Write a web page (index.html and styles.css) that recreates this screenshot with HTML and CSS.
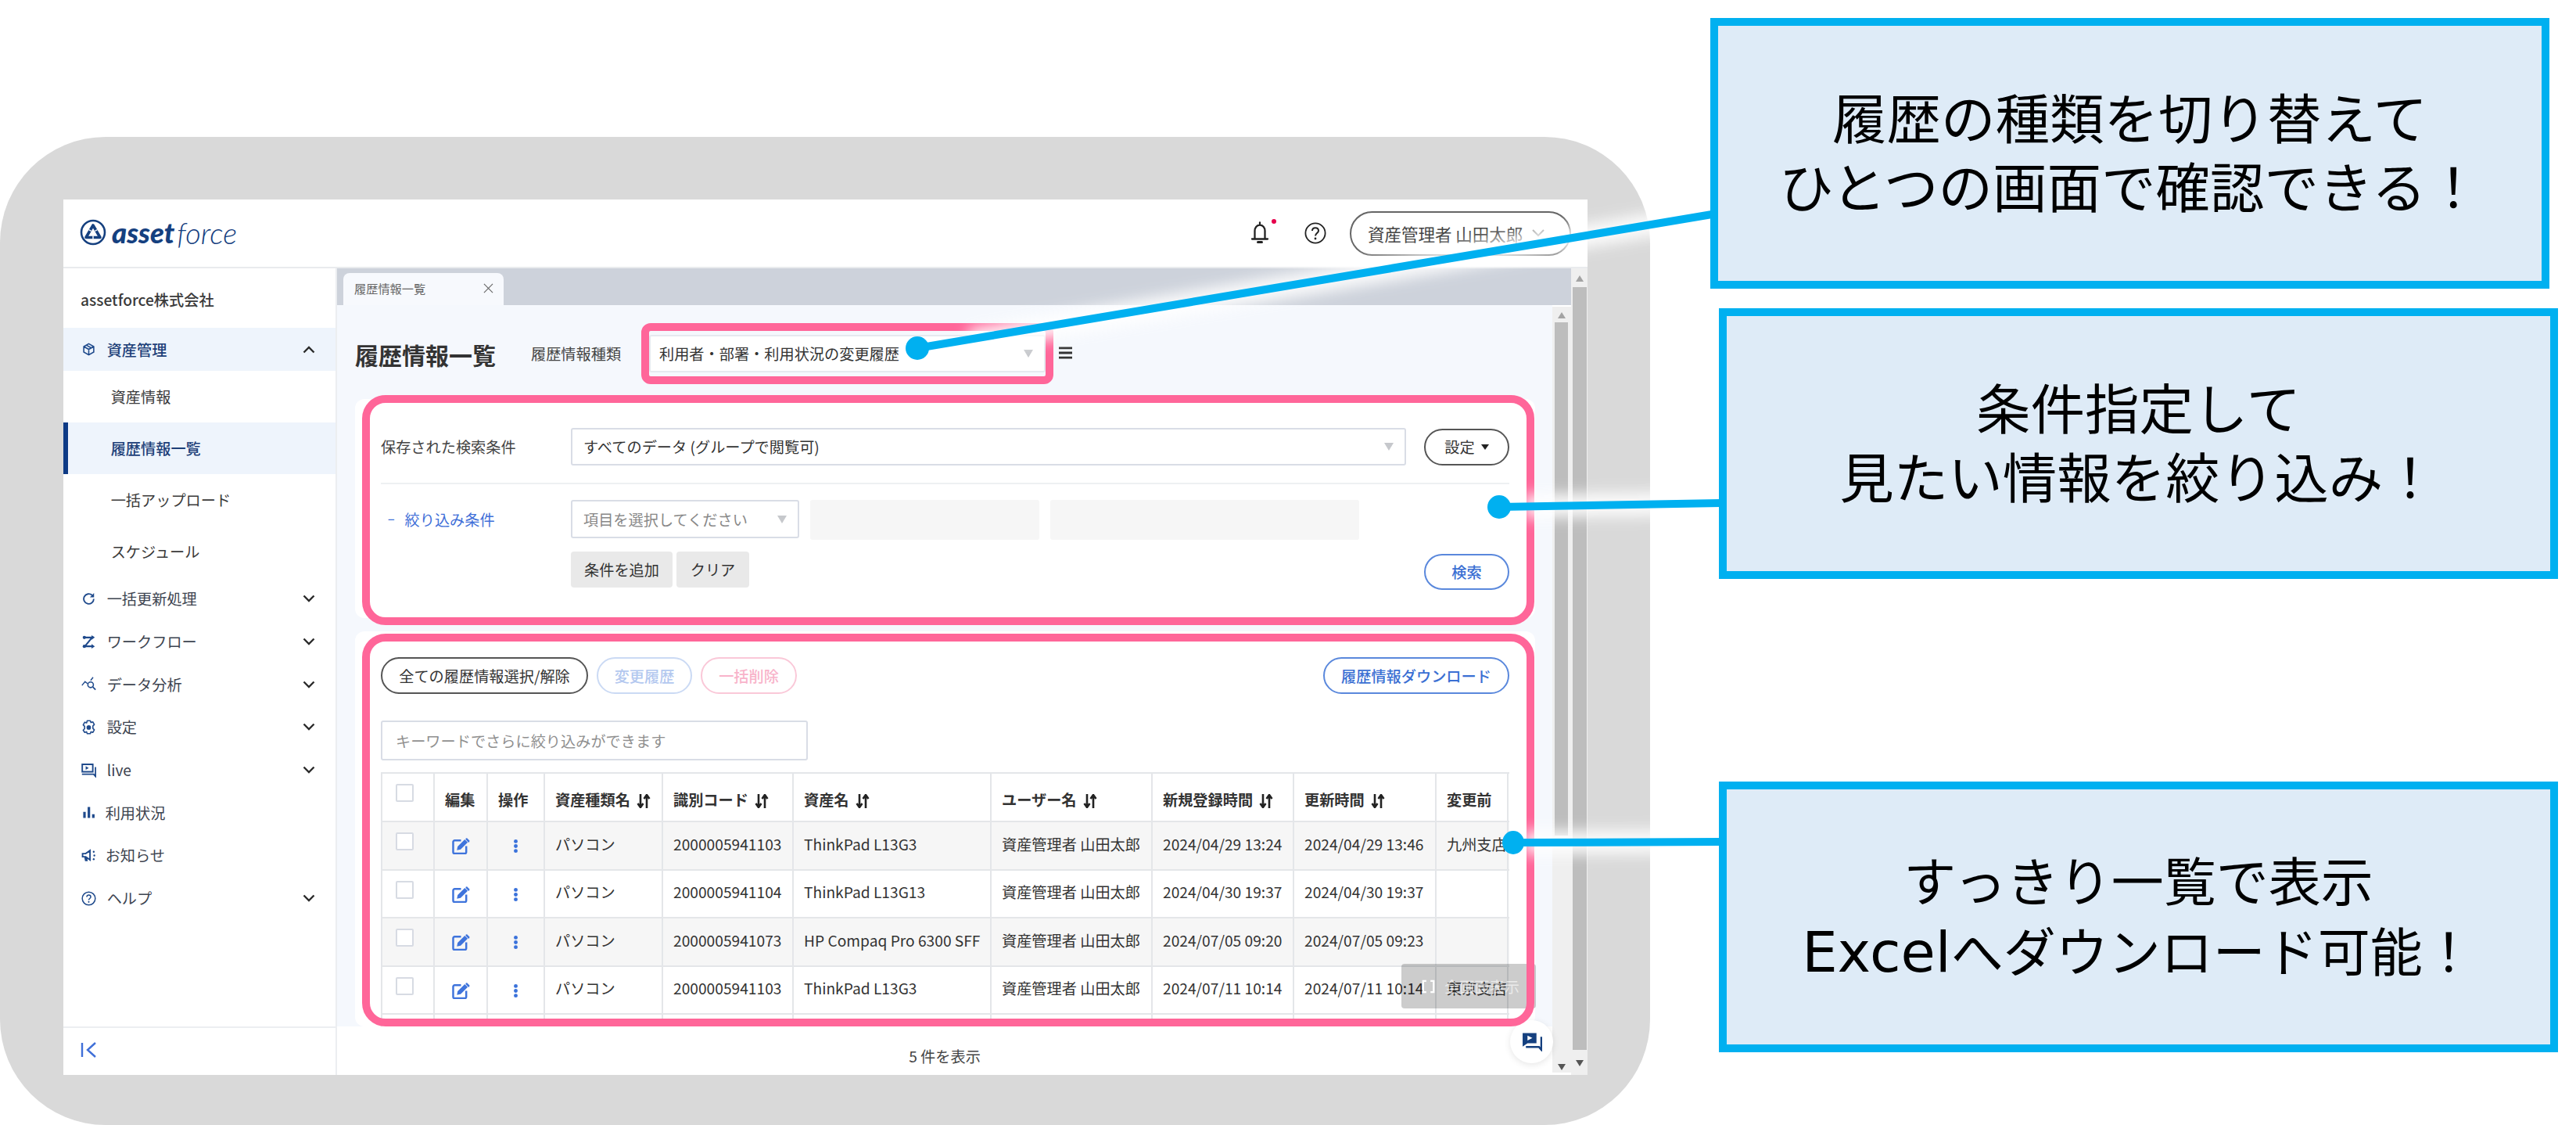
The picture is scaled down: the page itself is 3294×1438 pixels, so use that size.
FILE: index.html
```html
<!DOCTYPE html>
<html lang="ja">
<head>
<meta charset="utf-8">
<title>履歴情報一覧</title>
<link rel="stylesheet" href="styles.css">
</head>
<body>
<div class="slide">
  <div class="frame"></div>

  <div class="app">
    <header class="top">
      <div class="logo">
        <svg class="logo-mark" viewBox="0 0 34 34"><circle cx="17" cy="17" r="15" fill="none" stroke="#15407f" stroke-width="2.6"/><path d="M17 8 L26 23.5 H8 Z" fill="none" stroke="#15407f" stroke-width="3.6" stroke-linejoin="round"/><path d="M11.5 13.5l3 1.8M22.5 13.5l-3 1.8M17 25.5v-4" stroke="#fff" stroke-width="1.4"/></svg>
        <span class="logo-a">asset</span><span class="logo-b">force</span>
      </div>
      <div class="top-right">
        <span class="bell">
          <svg viewBox="0 0 24 30" class="bell-svg"><path d="M12 1.500v3M5.500 22V12a6.500 7.500 0 0 1 13 0V22M2 22.500h20" fill="none" stroke="#222" stroke-width="2.300" stroke-linecap="round"/><path d="M9.500 26.500h5" stroke="#222" stroke-width="3" stroke-linecap="round"/></svg>
          <i class="bell-dot"></i>
        </span>
        <svg class="help-top" viewBox="0 0 28 28"><circle cx="14" cy="14" r="12.600" fill="none" stroke="#222" stroke-width="1.800"/><path d="M10 11c0-5 8-5 8 0 0 3-4 3.200-4 6.500" fill="none" stroke="#222" stroke-width="2"/><circle cx="14" cy="21" r="1.400" fill="#222"/></svg>
        <div class="user">資産管理者 山田太郎<svg class="chev-user" viewBox="0 0 16 10"><path d="M1 1l7 7 7-7" fill="none" stroke="#999" stroke-width="2"/></svg></div>
      </div>
    </header>

    <div class="body">
      <aside class="side">
        <nav class="nav">
          <div class="company">assetforce株式会社</div>
          <div class="par on">
            <svg class="ic" viewBox="0 0 24 24"><path d="M12 2l9 5v10l-9 5-9-5V7zM3 7l9 5 9-5M12 12v10M7.500 4.500l9 5" fill="none" stroke="#1f4a8c" stroke-width="2.200"/></svg>
            <span>資産管理</span>
            <svg class="chev" viewBox="0 0 16 10"><path d="M1.500 8.500L8 2l6.500 6.500" fill="none" stroke="#2b2b2b" stroke-width="2.400"/></svg>
          </div>
          <div class="sub">資産情報</div>
          <div class="sub cur">履歴情報一覧</div>
          <div class="sub">一括アップロード</div>
          <div class="sub">スケジュール</div>
          <div class="par">
            <svg class="ic" viewBox="0 0 24 24"><path d="M21 12a9 9 0 1 1-3-6.700" fill="none" stroke="#1f4a8c" stroke-width="2.600"/><path d="M21.500 1.500v7.500h-7.500z" fill="#1f4a8c"/></svg>
            <span>一括更新処理</span>
            <svg class="chev" viewBox="0 0 16 10"><path d="M1.500 1.500L8 8l6.500-6.500" fill="none" stroke="#2b2b2b" stroke-width="2.400"/></svg>
          </div>
          <div class="par">
            <svg class="ic" viewBox="0 0 24 24"><path d="M3 4h15L5 20h13" fill="none" stroke="#1f4a8c" stroke-width="3"/><circle cx="4" cy="4" r="3" fill="#1f4a8c"/><circle cx="4" cy="20" r="3" fill="#1f4a8c"/><path d="M17 0l6 4-6 4zM17 16l6 4-6 4z" fill="#1f4a8c"/></svg>
            <span>ワークフロー</span>
            <svg class="chev" viewBox="0 0 16 10"><path d="M1.500 1.500L8 8l6.500-6.500" fill="none" stroke="#2b2b2b" stroke-width="2.400"/></svg>
          </div>
          <div class="par">
            <svg class="ic wide" viewBox="0 0 24 24"><path d="M1 14l5-6 4 3M15 6l4-5" fill="none" stroke="#1f4a8c" stroke-width="1.800"/><circle cx="15" cy="13" r="4.500" fill="none" stroke="#1f4a8c" stroke-width="2"/><path d="M18.500 16.500l4.500 4.500" stroke="#1f4a8c" stroke-width="2.200"/></svg>
            <span>データ分析</span>
            <svg class="chev" viewBox="0 0 16 10"><path d="M1.500 1.500L8 8l6.500-6.500" fill="none" stroke="#2b2b2b" stroke-width="2.400"/></svg>
          </div>
          <div class="par">
            <svg class="ic wide" viewBox="0 0 24 24"><path d="M9.500 1.500h5l1 3 3-1 2.500 4.300-2.300 2.200v4l2.300 2.200-2.500 4.300-3-1-1 3h-5l-1-3-3 1L3 16.700 5.300 14.500v-4L3 8.300 5.500 4l3 1z" fill="none" stroke="#1f4a8c" stroke-width="2" stroke-linejoin="round"/><circle cx="12" cy="12.500" r="3.600" fill="#1f4a8c"/></svg>
            <span>設定</span>
            <svg class="chev" viewBox="0 0 16 10"><path d="M1.500 1.500L8 8l6.500-6.500" fill="none" stroke="#2b2b2b" stroke-width="2.400"/></svg>
          </div>
          <div class="par">
            <svg class="ic wide" viewBox="0 0 24 24"><path d="M1.500 2.500h17v12h-17z" fill="none" stroke="#1f4a8c" stroke-width="2.400"/><path d="M1 18.500h19l3 3.500V7" fill="none" stroke="#1f4a8c" stroke-width="2.400"/><path d="M7 5.500l5 3-5 3z" fill="#1f4a8c"/></svg>
            <span>live</span>
            <svg class="chev" viewBox="0 0 16 10"><path d="M1.500 1.500L8 8l6.500-6.500" fill="none" stroke="#2b2b2b" stroke-width="2.400"/></svg>
          </div>
          <div class="par">
            <svg class="ic" viewBox="0 0 24 24"><path d="M2 11h4.500v11H2zM10 2h4.500v20H10zM18 15h4.500v7H18z" fill="#1f4a8c"/></svg>
            <span class="tight">利用状況</span>
          </div>
          <div class="par">
            <svg class="ic wide" viewBox="0 0 24 24"><path d="M2 9h5l7-5v15l-7-5H2zM6 15l1 5h2l-1-5" fill="none" stroke="#1f4a8c" stroke-width="2.400"/><circle cx="20" cy="6" r="1.500" fill="#1f4a8c"/><circle cx="21" cy="12" r="1.500" fill="#1f4a8c"/><circle cx="20" cy="18" r="1.500" fill="#1f4a8c"/></svg>
            <span class="tight">お知らせ</span>
          </div>
          <div class="par">
            <svg class="ic wide" viewBox="0 0 24 24"><circle cx="12" cy="12" r="10.500" fill="none" stroke="#1f4a8c" stroke-width="1.900"/><path d="M8.800 9.500c0-4.200 6.400-4.200 6.400 0 0 2.500-3.200 2.500-3.200 5" fill="none" stroke="#1f4a8c" stroke-width="1.900"/><circle cx="12" cy="17.500" r="1.300" fill="#1f4a8c"/></svg>
            <span>ヘルプ</span>
            <svg class="chev" viewBox="0 0 16 10"><path d="M1.500 1.500L8 8l6.500-6.500" fill="none" stroke="#2b2b2b" stroke-width="2.400"/></svg>
          </div>
        </nav>
        <div class="collapse">
          <svg class="collapse-ic" viewBox="0 0 22 20"><path d="M2 1v18M19 1L9 10l10 9" fill="none" stroke="#3f6fd8" stroke-width="2.400"/></svg>
        </div>
      </aside>

      <div class="main">
        <div class="col">
          <div class="tabbar">
            <div class="tab"><span>履歴情報一覧</span><svg class="tab-x" viewBox="0 0 14 14"><path d="M1 1l12 12M13 1L1 13" stroke="#666" stroke-width="1.200"/></svg></div>
          </div>
          <div class="pane">
            <div class="stack">
              <div class="content">
                <div class="title-row">
                  <h1 class="title">履歴情報一覧</h1>
                  <span class="type-label">履歴情報種類</span>
                  <div class="select type-select"><span>利用者・部署・利用状況の変更履歴</span><i class="tri"></i></div>
                  <svg class="burger" viewBox="0 0 18 16"><path d="M0 1.500h18M0 8h18M0 14.500h18" stroke="#333" stroke-width="3"/></svg>
                </div>

                <section class="card filter">
                  <div class="f-row saved">
                    <div class="f-label">保存された検索条件</div>
                    <div class="select grow"><span>すべてのデータ (グループで閲覧可)</span><i class="tri"></i></div>
                    <button class="pill setting">設定<i class="caret"></i></button>
                  </div>
                  <div class="f-row cond">
                    <div class="f-label link"><b class="minus">−</b>絞り込み条件</div>
                    <div class="select item"><span class="ph">項目を選択してください</span><i class="tri"></i></div>
                    <div class="blank b1"></div>
                    <div class="blank b2"></div>
                  </div>
                  <div class="f-actions">
                    <button class="gray add">条件を追加</button>
                    <button class="gray clear">クリア</button>
                    <button class="pill blue search">検索</button>
                  </div>
                </section>

                <section class="card result">
                  <div class="toolbar">
                    <button class="pill all">全ての履歴情報選択/解除</button>
                    <button class="pill faint-b">変更履歴</button>
                    <button class="pill faint-p">一括削除</button>
                    <button class="pill blue dl">履歴情報ダウンロード</button>
                  </div>
                  <div class="keyword">キーワードでさらに絞り込みができます</div>
                  <div class="table-wrap">
                    <table class="t">
                      <colgroup><col><col><col><col><col><col><col><col><col><col><col></colgroup>
                      <thead>
                        <tr>
                          <th class="chk"><i class="box"></i></th>
                          <th>編集</th><th>操作</th>
                          <th>資産種類名<svg class="sort" viewBox="0 0 18 18"><path d="M5 0v16M1.500 12L5 17l3.500-5M13 18V2M9.500 6L13 1l3.500 5" fill="none" stroke="#222" stroke-width="2.600"/></svg></th>
                          <th>識別コード<svg class="sort" viewBox="0 0 18 18"><path d="M5 0v16M1.500 12L5 17l3.500-5M13 18V2M9.500 6L13 1l3.500 5" fill="none" stroke="#222" stroke-width="2.600"/></svg></th>
                          <th>資産名<svg class="sort" viewBox="0 0 18 18"><path d="M5 0v16M1.500 12L5 17l3.500-5M13 18V2M9.500 6L13 1l3.500 5" fill="none" stroke="#222" stroke-width="2.600"/></svg></th>
                          <th>ユーザー名<svg class="sort" viewBox="0 0 18 18"><path d="M5 0v16M1.500 12L5 17l3.500-5M13 18V2M9.500 6L13 1l3.500 5" fill="none" stroke="#222" stroke-width="2.600"/></svg></th>
                          <th>新規登録時間<svg class="sort" viewBox="0 0 18 18"><path d="M5 0v16M1.500 12L5 17l3.500-5M13 18V2M9.500 6L13 1l3.500 5" fill="none" stroke="#222" stroke-width="2.600"/></svg></th>
                          <th>更新時間<svg class="sort" viewBox="0 0 18 18"><path d="M5 0v16M1.500 12L5 17l3.500-5M13 18V2M9.500 6L13 1l3.500 5" fill="none" stroke="#222" stroke-width="2.600"/></svg></th>
                          <th>変更前</th><th>変更後</th>
                        </tr>
                      </thead>
                      <tbody>
                        <tr>
                          <td class="chk"><i class="box"></i></td>
                          <td class="ctr"><svg class="edit" viewBox="0 0 24 22"><path d="M12 3.500H3.500a2 2 0 0 0-2 2V19a2 2 0 0 0 2 2H17a2 2 0 0 0 2-2v-8" fill="none" stroke="#3f74dc" stroke-width="2.600"/><path d="M7.500 11.500L17 2l4 4-9.500 9.500-5 1zM18.500 .5l1.500-.3 3.500 3.500-.3 1.500-1 1-4-4z" fill="#3f74dc"/></svg></td>
                          <td class="ctr"><svg class="kebab" viewBox="0 0 8 20"><circle cx="4" cy="3" r="2.800" fill="#3a72db"/><circle cx="4" cy="10" r="2.800" fill="#3a72db"/><circle cx="4" cy="17" r="2.800" fill="#3a72db"/></svg></td>
                          <td>パソコン</td><td>2000005941103</td><td>ThinkPad L13G3</td><td>資産管理者 山田太郎</td><td>2024/04/29 13:24</td><td>2024/04/29 13:46</td><td>九州支店</td><td></td>
                        </tr>
                        <tr>
                          <td class="chk"><i class="box"></i></td>
                          <td class="ctr"><svg class="edit" viewBox="0 0 24 22"><path d="M12 3.500H3.500a2 2 0 0 0-2 2V19a2 2 0 0 0 2 2H17a2 2 0 0 0 2-2v-8" fill="none" stroke="#3f74dc" stroke-width="2.600"/><path d="M7.500 11.500L17 2l4 4-9.500 9.500-5 1zM18.500 .5l1.500-.3 3.500 3.500-.3 1.500-1 1-4-4z" fill="#3f74dc"/></svg></td>
                          <td class="ctr"><svg class="kebab" viewBox="0 0 8 20"><circle cx="4" cy="3" r="2.800" fill="#3a72db"/><circle cx="4" cy="10" r="2.800" fill="#3a72db"/><circle cx="4" cy="17" r="2.800" fill="#3a72db"/></svg></td>
                          <td>パソコン</td><td>2000005941104</td><td>ThinkPad L13G13</td><td>資産管理者 山田太郎</td><td>2024/04/30 19:37</td><td>2024/04/30 19:37</td><td></td><td></td>
                        </tr>
                        <tr>
                          <td class="chk"><i class="box"></i></td>
                          <td class="ctr"><svg class="edit" viewBox="0 0 24 22"><path d="M12 3.500H3.500a2 2 0 0 0-2 2V19a2 2 0 0 0 2 2H17a2 2 0 0 0 2-2v-8" fill="none" stroke="#3f74dc" stroke-width="2.600"/><path d="M7.500 11.500L17 2l4 4-9.500 9.500-5 1zM18.500 .5l1.500-.3 3.500 3.500-.3 1.500-1 1-4-4z" fill="#3f74dc"/></svg></td>
                          <td class="ctr"><svg class="kebab" viewBox="0 0 8 20"><circle cx="4" cy="3" r="2.800" fill="#3a72db"/><circle cx="4" cy="10" r="2.800" fill="#3a72db"/><circle cx="4" cy="17" r="2.800" fill="#3a72db"/></svg></td>
                          <td>パソコン</td><td>2000005941073</td><td>HP Compaq Pro 6300 SFF</td><td>資産管理者 山田太郎</td><td>2024/07/05 09:20</td><td>2024/07/05 09:23</td><td></td><td></td>
                        </tr>
                        <tr>
                          <td class="chk"><i class="box"></i></td>
                          <td class="ctr"><svg class="edit" viewBox="0 0 24 22"><path d="M12 3.500H3.500a2 2 0 0 0-2 2V19a2 2 0 0 0 2 2H17a2 2 0 0 0 2-2v-8" fill="none" stroke="#3f74dc" stroke-width="2.600"/><path d="M7.500 11.500L17 2l4 4-9.500 9.500-5 1zM18.500 .5l1.500-.3 3.500 3.500-.3 1.500-1 1-4-4z" fill="#3f74dc"/></svg></td>
                          <td class="ctr"><svg class="kebab" viewBox="0 0 8 20"><circle cx="4" cy="3" r="2.800" fill="#3a72db"/><circle cx="4" cy="10" r="2.800" fill="#3a72db"/><circle cx="4" cy="17" r="2.800" fill="#3a72db"/></svg></td>
                          <td>パソコン</td><td>2000005941103</td><td>ThinkPad L13G3</td><td>資産管理者 山田太郎</td><td>2024/07/11 10:14</td><td>2024/07/11 10:14</td><td>東京支店</td><td></td>
                        </tr>
                        <tr><td></td><td></td><td></td><td></td><td></td><td></td><td></td><td></td><td></td><td></td><td></td></tr>
                      </tbody>
                    </table>
                  </div>
                </section>
                <div class="fullscreen"><svg class="fs-ic" viewBox="0 0 18 20"><path d="M6 2H1.500v16H6M12 2h4.500v16H12" fill="none" stroke="#fff" stroke-width="2.500"/></svg><span>全画面表示</span></div>
              </div>
              <footer class="foot">5 件を表示</footer>
            </div>
            <div class="scroll inner">
              <i class="sb-up"></i><div class="thumb"></div><i class="sb-down"></i>
            </div>
          </div>
          <div class="chat"><svg class="chat-ic" viewBox="0 0 25 24"><path d="M1 1.500h17v12.500H7l-6 4z" fill="#15407f"/><path d="M7 4.500l6 3-6 3z" fill="#fff"/><path d="M5 18.500h16l3 3.500V6" fill="none" stroke="#15407f" stroke-width="2.400"/></svg></div>
        </div>
        <div class="scroll outer">
          <i class="sb-up"></i><div class="thumb"></div><i class="sb-down"></i>
        </div>
      </div>
    </div>
  </div>

  <div class="mark m1"></div>
  <div class="mark m2"></div>
  <div class="mark m3"></div>

  <svg class="leaders" viewBox="0 0 3294 1438">
    <defs><filter id="glow" x="-20%" y="-200%" width="140%" height="500%"><feGaussianBlur stdDeviation="9"/></filter></defs>
    <g filter="url(#glow)" stroke="#fff" stroke-width="30" opacity=".9" fill="none">
      <path d="M1240 435L2190 274"/>
      <path d="M1950 647L2198 643"/>
      <path d="M1950 1077L2198 1076"/>
    </g>
    <g stroke="#00b0f0" stroke-width="10" fill="none">
      <path d="M1173 445L2195 273"/>
      <path d="M1917 648L2200 643"/>
      <path d="M1935 1077L2200 1076"/>
    </g>
    <ellipse cx="1173" cy="445" rx="15" ry="15" fill="#00b0f0"/>
    <ellipse cx="1917" cy="648" rx="15" ry="15" fill="#00b0f0"/>
    <ellipse cx="1935" cy="1077" rx="14" ry="15" fill="#00b0f0"/>
  </svg>

  <div class="note n1"><p>履歴の種類を切り替えて<br>ひとつの画面で確認できる！</p></div>
  <div class="note n2"><p>条件指定して<br>見たい情報を絞り込み！</p></div>
  <div class="note n3"><p>すっきり一覧で表示<br><span class="xl">Excel</span>へダウンロード可能！</p></div>
</div>
</body>
</html>
```
FILE: styles.css
```css
* { box-sizing: border-box; }
html, body { margin: 0; padding: 0; background: #fff; }
body { font-family: "Noto Sans CJK JP", "Noto Sans", sans-serif; font-size: 19.2px; color: #333; }
button { font: inherit; padding: 0; cursor: default; background: none; }
i { display: block; font-style: normal; }
.slide { position: relative; width: 3294px; height: 1438px; overflow: hidden; background: #fff; }
.frame { position: absolute; left: 0; top: 175px; width: 2110px; height: 1263px; border-radius: 135px; background: #d9d9d9; }

.app { position: absolute; left: 81px; top: 255px; width: 1949px; height: 1119px; background: #fff; display: flex; flex-direction: column; }
.top { height: 88px; flex: none; display: flex; align-items: center; padding: 0 21px; border-bottom: 2px solid #e9ebee; }
.logo { display: flex; align-items: center; color: #15407f; font-family: Lato, sans-serif; font-style: italic; font-size: 36.500px; line-height: 1; padding-bottom: 2px; }
.logo-mark { width: 34px; height: 34px; margin-right: 7px; }
.logo-a { font-weight: 900; margin-right: 3px; }
.logo-b { font-weight: 300; font-size: 38px; }
.top-right { margin-left: auto; display: flex; align-items: center; }
.bell { position: relative; width: 24px; height: 30px; margin: 0 45px 0 0; }
.bell-svg { width: 24px; height: 30px; display: block; }
.bell-dot { position: absolute; right: -9px; top: -3px; width: 6px; height: 6px; border-radius: 50%; background: #e6004c; }
.help-top { width: 28px; height: 28px; margin-right: 30px; }
.user { width: 283px; height: 57px; border: 2px solid #666; border-radius: 29px; display: flex; align-items: center; padding-left: 21px; font-size: 21.500px; color: #444; white-space: nowrap; }
.chev-user { width: 16px; height: 10px; margin-left: 12px; flex: none; }

.body { flex: 1; display: flex; min-height: 0; }
.side { width: 350px; flex: none; display: flex; flex-direction: column; border-right: 2px solid #eceef1; }
.nav { flex: 1; }
.company { height: 76px; padding: 4px 0 0 22px; display: flex; align-items: center; font-weight: 500; color: #3a3a3a; }
.par { height: 54.700px; display: flex; align-items: center; padding: 0 24px 0 21px; color: #3d4450; }
.par.on { height: 55px; background: #eef4fc; color: #1d3f78; font-weight: 500; }
.ic { width: 17px; height: 17px; margin: 0 14.700px 0 3px; flex: none; }
.ic.wide { width: 19px; height: 19px; margin: 0 13.700px 0 2px; }
.tight { margin-left: -2px; }
.chev { width: 16px; height: 10px; margin-left: auto; margin-right: 2px; }
.sub { height: 66px; padding: 0 0 0 60.700px; display: flex; align-items: center; color: #3a3a3a; }
.sub.cur { background: #eef4fc; border-left: 6px solid #0e3a85; padding-left: 54.700px; color: #1d3f78; font-weight: 500; }
.collapse { height: 62px; flex: none; border-top: 2px solid #eceef1; display: flex; align-items: center; padding: 0 0 4px 22px; }
.collapse-ic { width: 22px; height: 20px; }

.main { flex: 1; min-width: 0; display: flex; }
.col { position: relative; flex: 1; min-width: 0; display: flex; flex-direction: column; }
.tabbar { height: 47px; flex: none; background: #cdd2db; padding: 6px 0 0 8px; }
.tab { width: 205px; height: 41px; border-radius: 8px 8px 0 0; background: #f7f9fd; display: flex; align-items: center; padding: 0 13px 3px 14px; font-size: 15.200px; color: #666; }
.tab-x { width: 13px; height: 13px; margin-left: auto; }
.pane { flex: 1; min-height: 0; display: flex; }
.stack { flex: 1; min-width: 0; display: flex; flex-direction: column; }
.content { position: relative; flex: 1; min-height: 0; background: #f5f8fd; padding: 38px 22px 0 23px; overflow: hidden; }
.foot { height: 62px; flex: none; background: #fff; display: flex; align-items: center; justify-content: center; padding-top: 14px; color: #444; }

.title-row { display: flex; align-items: center; height: 48px; }
.title { margin: 2px 45px 0 0; font-size: 30px; font-weight: 700; color: #333; width: 180px; white-space: nowrap; line-height: 48px; }
.type-label { width: 151px; flex: none; color: #444; }
.select { position: relative; height: 48px; border: 2px solid #d9dde6; border-radius: 3px; background: #fff; display: flex; align-items: center; padding: 0 14px 0 11px; color: #333; }
.type-select { width: 507px; border-color: #e6e9ef; }
.tri { margin-left: auto; width: 0; height: 0; border-left: 6px solid transparent; border-right: 6px solid transparent; border-top: 10px solid #c6c8cc; }
.burger { width: 17px; height: 16px; margin-left: 17px; margin-top: -2px; }

.card { background: #fff; border-radius: 12px; padding: 0 33px; }
.filter { margin-top: 34px; height: 280px; padding-top: 37px; }
.f-row { display: flex; }
.saved { align-items: center; padding-bottom: 22px; border-bottom: 2px solid #eef0f2; }
.f-label { width: 243px; flex: none; color: #444; }
.grow { flex: 1; padding-left: 14px; }
.setting { width: 109px; height: 46px; margin-left: 23px; flex: none; }
.pill { border: 2px solid #555; border-radius: 24px; background: #fff; color: #333; height: 47px; display: inline-flex; align-items: center; justify-content: center; white-space: nowrap; }
.caret { width: 0; height: 0; margin-left: 8px; border-left: 5px solid transparent; border-right: 5px solid transparent; border-top: 7px solid #222; }
.cond { padding-top: 20px; align-items: flex-start; }
.link { color: #3f6fd8; height: 49px; display: flex; align-items: center; padding-left: 9px; }
.minus { font-weight: 500; margin-right: 13px; font-size: 15px; }
.item { width: 292px; height: 49px; padding-left: 14px; }
.ph { color: #888; }
.blank { height: 51px; background: #f6f6f6; border-radius: 3px; margin-left: 14px; }
.b1 { width: 293px; }
.b2 { width: 395px; }
.f-actions { display: flex; align-items: flex-start; padding: 15px 0 0 243px; }
.gray { height: 46px; border: 0; border-radius: 4px; background: #e9e9e9; color: #333; }
.add { width: 130px; }
.clear { width: 93px; margin-left: 5px; }
.search { width: 109px; height: 46px; margin: 3px 0 0 auto; }
.blue { border-color: #5a88dc; color: #3a6fd3; font-weight: 500; }

.result { margin-top: 17px; height: 505px; padding-top: 33px; overflow: hidden; }
.toolbar { display: flex; gap: 11px; }
.all { width: 265px; }
.faint-b { width: 122px; border-color: #cbdaf4; color: #b3c8ef; font-weight: 500; }
.faint-p { width: 123px; border-color: #fac8d8; color: #f8b3ca; font-weight: 500; }
.dl { width: 238px; margin-left: auto; }
.keyword { width: 546px; height: 51px; margin-top: 34px; border: 2px solid #d9dde6; border-radius: 3px; display: flex; align-items: center; padding-left: 17px; color: #8f8f8f; }
.table-wrap { margin-top: 15px; width: 100%; overflow: hidden; }
.t { table-layout: fixed; width: 1550px; border-collapse: collapse; border-top: 2px solid #e4e6e9; border-left: 2px solid #e4e6e9; }
.t col:nth-child(1) { width: 67px; }
.t col:nth-child(2) { width: 68px; }
.t col:nth-child(3) { width: 73px; }
.t col:nth-child(4) { width: 151px; }
.t col:nth-child(5) { width: 167px; }
.t col:nth-child(6) { width: 253px; }
.t col:nth-child(7) { width: 206px; }
.t col:nth-child(8) { width: 181px; }
.t col:nth-child(9) { width: 182px; }
.t col:nth-child(10) { width: 92px; }
.t col:nth-child(11) { width: 110px; }
.t th, .t td { border-right: 2px solid #e4e6e9; border-bottom: 2px solid #e4e6e9; padding: 0 0 4px 13px; white-space: nowrap; overflow: hidden; text-align: left; color: #333; }
.t th { height: 62px; font-weight: 700; padding: 6px 0 0 13px; }
.t td { height: 61.500px; }
.t tbody tr:nth-child(odd) td { background: #f6f6f6; }
.t tbody tr:nth-child(5) td { background: #fff; }
.t .chk { vertical-align: top; padding: 13px 0 0 17px; }
.t .ctr { padding: 0 0 4px; text-align: center; }
.box { width: 23px; height: 23px; border: 2px solid #d7dbe3; background: #fff; border-radius: 2px; }
.sort { width: 18px; height: 18px; margin-left: 8px; vertical-align: -3px; }
.edit { width: 23px; height: 21px; vertical-align: middle; }
.kebab { width: 7px; height: 19px; vertical-align: middle; }

.fullscreen { position: absolute; right: 21px; top: 842px; width: 172px; height: 57px; border-radius: 4px; background: rgba(0, 0, 0, .2); display: flex; align-items: center; padding-left: 26px; color: rgba(255, 255, 255, .6); }
.fs-ic { width: 17px; height: 18px; margin-right: 12px; }
.chat { position: absolute; right: 23px; bottom: 15px; width: 55px; height: 55px; border-radius: 50%; background: #fff; box-shadow: 0 2px 8px rgba(0, 0, 0, .1); display: flex; align-items: center; justify-content: center; }
.chat-ic { width: 26px; height: 25px; }

.scroll { flex: none; background: #efefef; display: flex; flex-direction: column; align-items: center; }
.inner { width: 24px; margin: 2px 0 3px; padding: 0 4px 0 3px; }
.outer { width: 21px; padding: 0 1px 0 2px; }
.thumb { background: #bdbdbd; width: 100%; }
.inner .thumb { height: 656px; }
.outer .thumb { height: 975px; }
.sb-up { flex: none; width: 0; height: 0; border-left: 5px solid transparent; border-right: 5px solid transparent; border-bottom: 8px solid #a3a3a3; }
.sb-down { flex: none; width: 0; height: 0; border-left: 5px solid transparent; border-right: 5px solid transparent; border-top: 8px solid #555; }
.inner .sb-up { margin: 7px 0 5px; }
.inner .sb-down { margin-top: auto; margin-bottom: 3px; }
.outer .sb-up { margin: 9px 0 7px; }
.outer .sb-down { margin-top: 13px; }

.mark { position: absolute; border: 10px solid #ff6699; background: transparent; }
.m1 { left: 820px; top: 413px; width: 527px; height: 78px; border-radius: 12px; }
.m2 { left: 463px; top: 505px; width: 1499px; height: 294px; border-radius: 30px; }
.m3 { left: 463px; top: 810px; width: 1499px; height: 502px; border-radius: 30px; }

.leaders { position: absolute; left: 0; top: 0; width: 3294px; height: 1438px; pointer-events: none; }

.note { position: absolute; border: 10px solid #00b0f0; background: #deebf7; display: flex; align-items: center; justify-content: center; text-align: center; color: #000; font-family: "DejaVu Sans", "Noto Sans CJK JP", sans-serif; font-size: 69.500px; line-height: 88px; }
.note p { margin: 0; padding-top: 4px; }
.n1 { left: 2187px; top: 23px; width: 1073px; height: 346px; }
.n2 { left: 2198px; top: 394px; width: 1073px; height: 346px; }
.n3 { left: 2198px; top: 999px; width: 1073px; height: 346px; font-size: 67px; }
.xl { font-size: 72px; }
```
